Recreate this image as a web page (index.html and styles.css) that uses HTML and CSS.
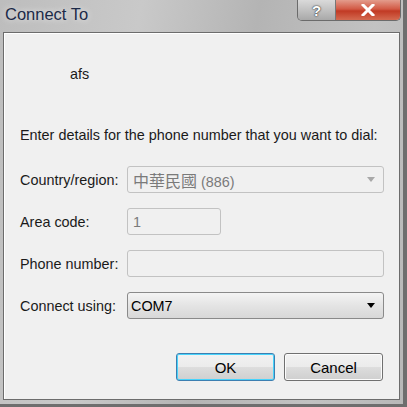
FILE: index.html
```html
<!doctype html>
<html lang="en">
  <head>
    <meta charset="UTF-8" />
    <title>Connect To</title>
    <link rel="stylesheet" href="styles.css">
  </head>
  <body>
    <div class="window">
      <div class="titlebar">
        <span class="title">Connect To</span>
        <div class="caption-btns">
          <span class="cap-btn help">?</span>
          <span class="cap-btn close">
            <svg width="14" height="12" viewBox="0 0 14 12">
              <path d="M2 1 L12 11 M12 1 L2 11" stroke="#fff" stroke-width="3" stroke-linecap="square" />
            </svg>
          </span>
        </div>
      </div>

      <div class="client">
        <div class="entry-name">afs</div>
        <p class="intro">Enter details for the phone number that you want to dial:</p>

        <div class="form">
          <label>Country/region:</label>
          <div class="field combo disabled wide">
            <span><span class="cjk">中華民國</span> (886)</span>
            <span class="arrow"></span>
          </div>

          <label>Area code:</label>
          <div class="field disabled short"><span>1</span></div>

          <label>Phone number:</label>
          <div class="field disabled wide"></div>

          <label>Connect using:</label>
          <div class="field combo active wide">
            <span>COM7</span>
            <span class="arrow"></span>
          </div>
        </div>

        <div class="buttons">
          <button class="btn default">OK</button>
          <button class="btn">Cancel</button>
        </div>
      </div>
    </div>
  </body>
</html>
```

FILE: styles.css
```css
* {
  margin: 0;
  padding: 0;
  box-sizing: border-box;
}

body {
  font-family: "Liberation Sans", Arial, "Noto Sans CJK TC", sans-serif;
  font-size: 14.4px;
  background: #fff;
}

.window {
  width: 407px;
  height: 407px;
  background: linear-gradient(100deg, #bdbdbd 0%, #c9c9c9 30%, #b4b4b4 55%, #c2c2c2 80%, #b8b8b8 100%);
  border-right: 4px solid #6e6e6e;
  border-bottom: 3px solid #6e6e6e;
  display: flex;
  flex-direction: column;
}

.titlebar {
  height: 32px;
  display: flex;
  justify-content: space-between;
  align-items: flex-start;
}

.title {
  margin: 5px 0 0 5px;
  font-size: 16.5px;
  color: #1c2a48;
  text-shadow: 0 0 6px rgba(255, 255, 255, 0.8);
}

.caption-btns {
  display: flex;
  margin-right: 2px;
  border: 1px solid #6b6b6b;
  border-top: none;
  border-radius: 0 0 5px 5px;
  overflow: hidden;
}

.cap-btn {
  height: 20px;
  display: flex;
  align-items: center;
  justify-content: center;
}

.help {
  width: 38px;
  background: linear-gradient(#dadada, #a9a9a9);
  border-right: 1px solid #777;
  color: #fff;
  font-weight: bold;
  font-size: 15px;
  text-shadow: 0 0 2px #333, 0 0 1px #333;
}

.close {
  width: 64px;
  background: linear-gradient(#e39c8c 0%, #d25a45 45%, #c13a24 55%, #d46a50 100%);
}

.client {
  margin-left: 3px;
  width: 397px;
  height: 368px;
  background: #f0f0f0;
  border: 1px solid #6c6c6c;
  box-shadow: inset 1px 1px 0 #fff;
  padding: 0 15px 0 16px;
}

.entry-name {
  margin: 33px 0 0 50px;
  line-height: 17px;
  color: #1a1a1a;
}

.intro {
  margin-top: 44px;
  line-height: 17px;
  color: #1a1a1a;
}

.form {
  margin-top: 22px;
  display: grid;
  grid-template-columns: 107px 1fr;
  row-gap: 15px;
  align-items: center;
}

.form label {
  color: #1a1a1a;
}

.field {
  height: 27px;
  border: 1px solid #c2c2c2;
  border-radius: 3px;
  background: #f0f0f0;
  display: flex;
  align-items: center;
  justify-content: space-between;
  padding: 0 8px 0 5px;
}

.field.short {
  width: 94px;
}

.field.disabled span {
  color: #7a7a7a;
}

.cjk {
  font-size: 16px;
}

.combo.active {
  border-color: #8a8a8a;
  background: linear-gradient(#f4f4f4, #e4e4e4 50%, #d8d8d8);
  padding-left: 3px;
}

.combo.active span {
  color: #000;
}

.arrow {
  width: 0;
  height: 0;
  border-left: 4px solid transparent;
  border-right: 4px solid transparent;
  border-top: 5px solid #a8a8a8;
}

.combo.active .arrow {
  border-top-color: #000;
}

.buttons {
  margin-top: 34px;
  display: flex;
  justify-content: flex-end;
  gap: 9px;
  padding-right: 1px;
}

.btn {
  width: 99px;
  height: 28px;
  font-family: inherit;
  font-size: 15px;
  color: #000;
  border: 1px solid #707070;
  border-radius: 3px;
  background: linear-gradient(#f2f2f2, #ebebeb 50%, #dddddd 51%, #cfcfcf);
  box-shadow: inset 0 0 0 1px #fcfcfc;
}

.btn.default {
  border-color: #3c7fb1;
  box-shadow: inset 0 0 0 1px #48d3fb;
}
```
